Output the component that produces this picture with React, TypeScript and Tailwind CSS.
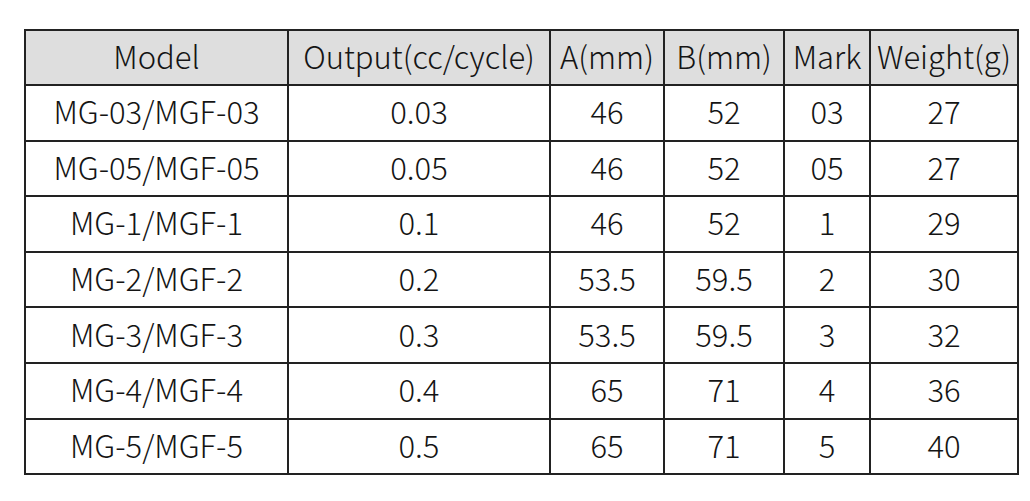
import React from 'react';

const headers = ['Model', 'Output(cc/cycle)', 'A(mm)', 'B(mm)', 'Mark', 'Weight(g)'];
const widths = ['w-[263px]', 'w-[262px]', 'w-[114px]', 'w-[120px]', 'w-[86px]', 'w-[148px]'];

const rows: string[][] = [
  ['MG-03/MGF-03', '0.03', '46', '52', '03', '27'],
  ['MG-05/MGF-05', '0.05', '46', '52', '05', '27'],
  ['MG-1/MGF-1', '0.1', '46', '52', '1', '29'],
  ['MG-2/MGF-2', '0.2', '53.5', '59.5', '2', '30'],
  ['MG-3/MGF-3', '0.3', '53.5', '59.5', '3', '32'],
  ['MG-4/MGF-4', '0.4', '65', '71', '4', '36'],
  ['MG-5/MGF-5', '0.5', '65', '71', '5', '40'],
];

const App: React.FC = () => {
  return (
    <div className="w-[1030px] h-[501px] bg-white pt-[29px] pl-[24px] font-['Noto_Sans_CJK_SC',sans-serif] font-light text-[#141414]">
      <table className="table-fixed border-collapse w-[993px]">
        <colgroup>
          {widths.map((w, i) => (
            <col key={i} className={w} />
          ))}
        </colgroup>
        <thead>
          <tr className="h-[55px] bg-[#dedede]">
            {headers.map((h) => (
              <th
                key={h}
                className="border-2 border-[#222] p-0 pb-[4px] text-center text-[31px] font-light leading-none whitespace-nowrap"
              >
                {h}
              </th>
            ))}
          </tr>
        </thead>
        <tbody>
          {rows.map((r) => (
            <tr key={r[0]} className="h-[55.6px]">
              {r.map((c, i) => (
                <td
                  key={i}
                  className="border-2 border-[#222] p-0 pb-[4px] text-center text-[31px] leading-none whitespace-nowrap"
                >
                  {c}
                </td>
              ))}
            </tr>
          ))}
        </tbody>
      </table>
    </div>
  );
};

export default App;
